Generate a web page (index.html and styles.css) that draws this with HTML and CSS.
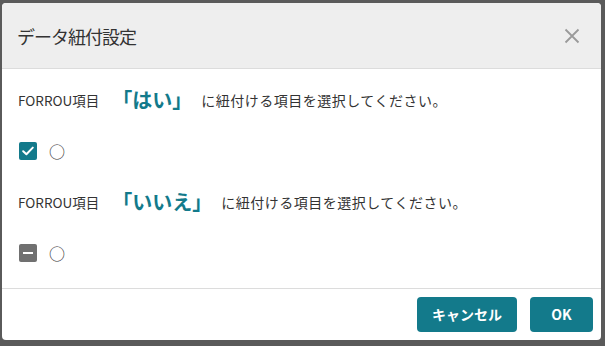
FILE: index.html
```html
<!DOCTYPE html>
<html lang="ja">
<head>
<meta charset="utf-8">
<link rel="stylesheet" href="styles.css">
</head>
<body>
<div class="backdrop">
  <div class="modal">
    <div class="modal-header">
      <h1 class="modal-title">データ紐付設定</h1>
      <button class="close" aria-label="閉じる">
        <svg width="16" height="16" viewBox="0 0 16 16"><path d="M1.5 1.5 L14.5 14.5 M14.5 1.5 L1.5 14.5" stroke="#9a9a9a" stroke-width="1.8" fill="none"/></svg>
      </button>
    </div>
    <div class="modal-body">
      <div class="prompt">
        <span class="label">FORROU項目</span>
        <span class="answer">「はい」</span>
        <span class="sentence">に紐付ける項目を選択してください。</span>
      </div>
      <div class="option">
        <span class="box checked">
          <svg width="12" height="10" viewBox="0 0 12 10"><path d="M1.2 5.2 L4.4 8.2 L10.8 1.6" stroke="#fff" stroke-width="2" fill="none" stroke-linecap="round" stroke-linejoin="round"/></svg>
        </span>
        <span class="opt-text">○</span>
      </div>
      <div class="prompt">
        <span class="label">FORROU項目</span>
        <span class="answer">「いいえ」</span>
        <span class="sentence">に紐付ける項目を選択してください。</span>
      </div>
      <div class="option">
        <span class="box mixed"><span class="dash"></span></span>
        <span class="opt-text">○</span>
      </div>
    </div>
    <div class="modal-footer">
      <button class="btn">キャンセル</button>
      <button class="btn ok">OK</button>
    </div>
  </div>
</div>
</body>
</html>
```

FILE: styles.css
```css
html, body {
  margin: 0;
  padding: 0;
}
body {
  background: #5a5a5a;
  font-family: "Noto Sans CJK JP", "Noto Sans", sans-serif;
  width: 605px;
  height: 346px;
  overflow: hidden;
}
.backdrop {
  padding: 3px 4px 6px 2px;
}
.modal {
  width: 599px;
  height: 337px;
  background: #fff;
  border-radius: 4px;
  display: flex;
  flex-direction: column;
  overflow: hidden;
}
.modal-header {
  height: 65px;
  background: #eeeeee;
  border-bottom: 1px solid #dcdcdc;
  display: flex;
  align-items: center;
  justify-content: space-between;
  padding: 0 21px 0 15px;
}
.modal-title {
  margin: 0;
  font-size: 18px;
  font-weight: 400;
  color: #333;
  letter-spacing: -1px;
}
.close {
  border: 0;
  background: none;
  padding: 0;
  width: 16px;
  height: 16px;
  display: flex;
}
.modal-body {
  flex: 1;
  padding: 5px 16px 0 16px;
}
.prompt {
  height: 51px;
  display: flex;
  align-items: center;
  color: #333;
}
.label {
  font-size: 13.5px;
}
.sentence {
  font-size: 14px;
  letter-spacing: 0.5px;
}
.answer {
  font-size: 20px;
  font-weight: 700;
  color: #137a8b;
  margin: 0 9px 0 13px;
}
.option {
  height: 51px;
  display: flex;
  align-items: center;
  padding-left: 1px;
}
.box {
  width: 18px;
  height: 18px;
  border-radius: 2px;
  display: flex;
  align-items: center;
  justify-content: center;
  margin-right: 12px;
}
.box.checked {
  background: #137a8b;
}
.box.mixed {
  background: #707070;
}
.dash {
  width: 10px;
  height: 2px;
  background: #fff;
}
.opt-text {
  font-size: 16px;
  color: #333;
}
.modal-footer {
  border-top: 1px solid #dcdcdc;
  height: 50px;
  display: flex;
  align-items: center;
  justify-content: flex-end;
  gap: 13px;
  padding: 0 8px 1px 0;
}
.btn {
  height: 35px;
  width: 100px;
  border: 0;
  border-radius: 4px;
  background: #137a8b;
  color: #fff;
  font-family: "Noto Sans CJK JP", "Noto Sans", sans-serif;
  font-size: 14px;
  font-weight: 700;
}
.btn.ok {
  width: 63px;
}
```
